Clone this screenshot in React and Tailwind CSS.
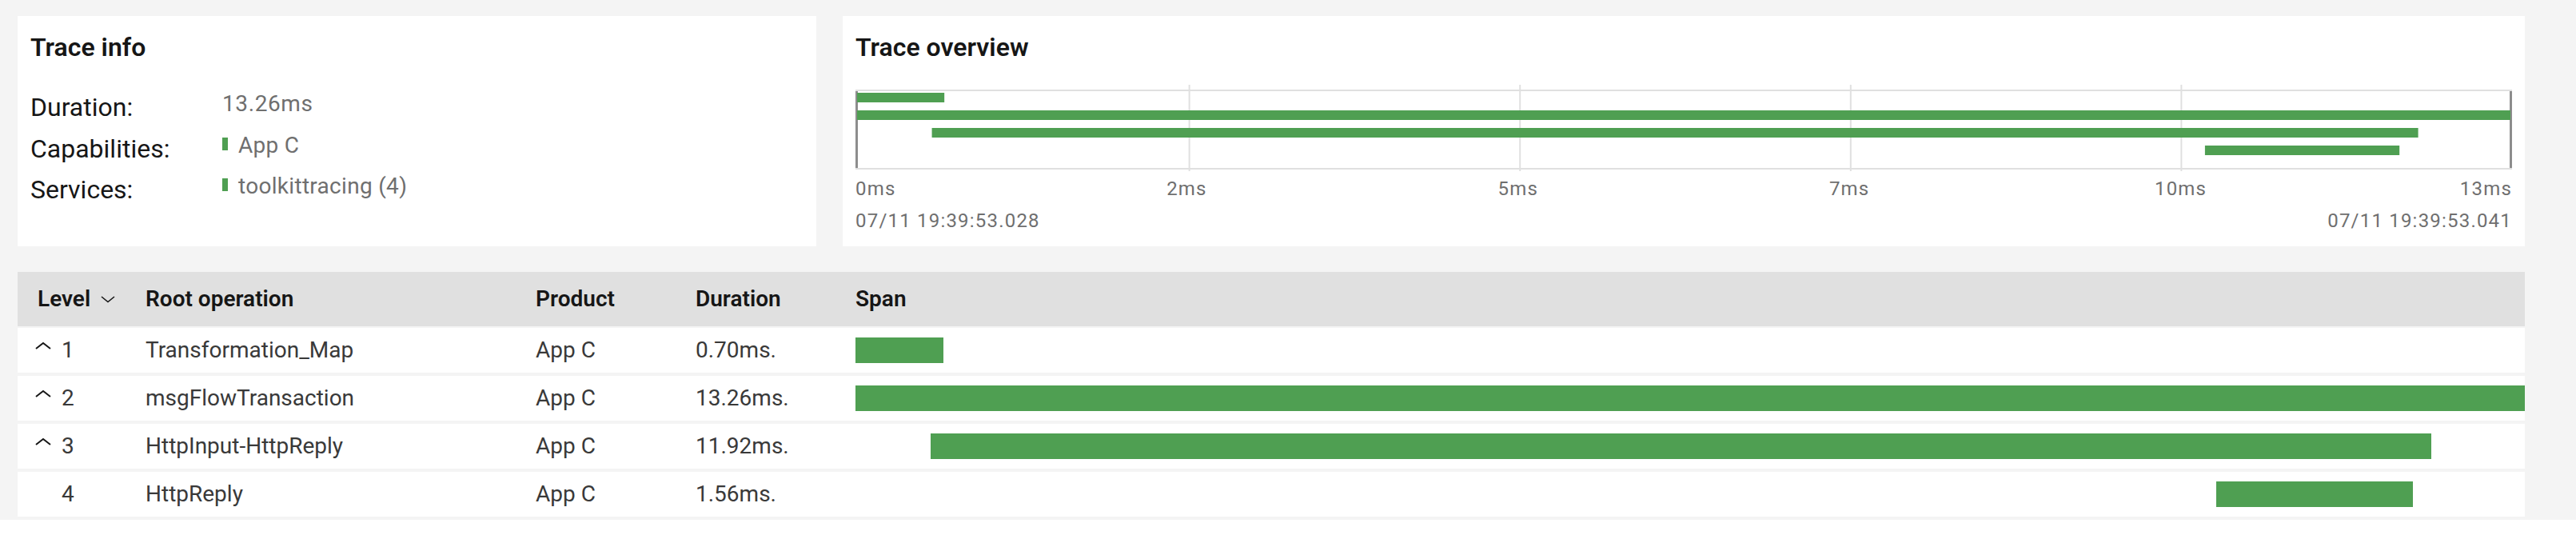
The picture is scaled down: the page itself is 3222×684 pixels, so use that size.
import React from 'react';

const TOTAL = 13.26;

const spans = [
    { level: 1, op: 'Transformation_Map', product: 'App C', duration: 0.7, start: 0, expandable: true },
    { level: 2, op: 'msgFlowTransaction', product: 'App C', duration: 13.26, start: 0, expandable: true },
    { level: 3, op: 'HttpInput-HttpReply', product: 'App C', duration: 11.92, start: 0.6, expandable: true },
    { level: 4, op: 'HttpReply', product: 'App C', duration: 1.56, start: 10.81, expandable: false },
];

const ticks = [
    { label: '0ms', cls: 'left-0' },
    { label: '2ms', cls: 'left-[20%] -translate-x-1/2' },
    { label: '5ms', cls: 'left-[40%] -translate-x-1/2' },
    { label: '7ms', cls: 'left-[60%] -translate-x-1/2' },
    { label: '10ms', cls: 'left-[80%] -translate-x-1/2' },
    { label: '13ms', cls: 'right-0' },
];

const GREEN = '#4f9f52';

const Overview = () => {
    const W = 2072;
    const scale = 2068;
    return (
        <svg viewBox={`0 0 ${W} 108`} preserveAspectRatio="none" className="block w-full h-[108px]">
            <rect x="0" y="6" width={W} height="2" fill="#e0e0e0" />
            <rect x="0" y="104" width={W} height="2" fill="#e0e0e0" />
            {[1, 2, 3, 4].map((k) => (
                <rect key={k} x={3 + (k * scale) / 5} y="0" width="2" height="108" fill="#e0e0e0" />
            ))}
            <rect x="0" y="8" width="3" height="96" fill="#8d8d8d" />
            <rect x="2069" y="8" width="3" height="96" fill="#8d8d8d" />
            {spans.map((s, i) => (
                <rect
                    key={i}
                    x={2 + (s.start / TOTAL) * scale}
                    y={10 + i * 22}
                    width={(s.duration / TOTAL) * scale}
                    height="12"
                    fill={GREEN}
                />
            ))}
        </svg>
    );
};

const App = () => {
    return (
        <div className="min-h-screen bg-[#f4f4f4] font-['Roboto',sans-serif] text-[#161616]">
            <div className="pl-[22px] pr-[64px] pt-[20px] pb-[4px]">
                {/* Top cards */}
                <div className="flex gap-[33px]">
                    <div className="w-[999px] h-[288px] bg-white px-[16px] pt-[19px]">
                        <h2 className="text-[32px] leading-[40px] font-semibold">Trace info</h2>
                        <div className="mt-[30px]">
                            <div className="flex items-start h-[51.5px]">
                                <div className="w-[240px] text-[32px] leading-[51.5px]">Duration:</div>
                                <div className="text-[28px] leading-[42px] tracking-[0.6px] text-[#6f6f6f]">13.26ms</div>
                            </div>
                            <div className="flex items-start h-[51.5px]">
                                <div className="w-[240px] text-[32px] leading-[51.5px]">Capabilities:</div>
                                <div className="flex items-start gap-[13px]">
                                    <span className="mt-[11px] w-[7px] h-[16px] bg-[#4f9f52]"></span>
                                    <span className="text-[28px] leading-[42px] tracking-[0.3px] text-[#6f6f6f]">App C</span>
                                </div>
                            </div>
                            <div className="flex items-start h-[51.5px]">
                                <div className="w-[240px] text-[32px] leading-[51.5px]">Services:</div>
                                <div className="flex items-start gap-[13px]">
                                    <span className="mt-[11px] w-[7px] h-[16px] bg-[#4f9f52]"></span>
                                    <span className="text-[28px] leading-[42px] tracking-[0.3px] text-[#6f6f6f]">toolkittracing (4)</span>
                                </div>
                            </div>
                        </div>
                    </div>

                    <div className="flex-1 h-[288px] bg-white px-[16px] pt-[19px]">
                        <h2 className="text-[32px] leading-[40px] font-semibold">Trace overview</h2>
                        <div className="mt-[27px]">
                            <Overview />
                        </div>
                        <div className="relative h-[40px] mt-[2px] text-[24px] leading-[40px] tracking-[1.2px] text-[#6f6f6f]">
                            {ticks.map((t) => (
                                <span key={t.label} className={`absolute top-0 ${t.cls}`}>{t.label}</span>
                            ))}
                        </div>
                        <div className="flex justify-between text-[24px] leading-[40px] tracking-[1.2px] text-[#6f6f6f]">
                            <span>07/11 19:39:53.028</span>
                            <span>07/11 19:39:53.041</span>
                        </div>
                    </div>
                </div>

                {/* Spans table */}
                <div className="mt-[32px]">
                    <div className="grid grid-cols-[160px_488px_200px_200px_1fr] items-center h-[68px] bg-[#e0e0e0] text-[28px] font-semibold">
                        <div className="flex items-center gap-[13px] pl-[25px]">
                            <span>Level</span>
                            <svg width="18" height="9" viewBox="0 0 18 9" fill="none" stroke="#161616" strokeWidth="1.6">
                                <polyline points="1,1 9,7.5 17,1" />
                            </svg>
                        </div>
                        <div>Root operation</div>
                        <div>Product</div>
                        <div>Duration</div>
                        <div>Span</div>
                    </div>
                    <div className="mt-[2px] flex flex-col gap-[4px]">
                        {spans.map((s) => (
                            <div
                                key={s.level}
                                className="grid grid-cols-[160px_488px_200px_200px_1fr] items-center h-[56px] bg-white text-[28px] text-[#393939]"
                            >
                                <div className="flex items-center gap-[13px] pl-[22px]">
                                    <svg
                                        width="20"
                                        height="9"
                                        viewBox="0 0 20 9"
                                        fill="none"
                                        stroke={s.expandable ? '#161616' : 'transparent'}
                                        strokeWidth="2"
                                        className="-mt-[12px]"
                                    >
                                        <polyline points="1,8 10,1 19,8" />
                                    </svg>
                                    <span>{s.level}</span>
                                </div>
                                <div>{s.op}</div>
                                <div>{s.product}</div>
                                <div>{s.duration.toFixed(2)}ms.</div>
                                <div className="relative h-[32px]">
                                    <div
                                        className="absolute top-0 h-full bg-[#4f9f52]"
                                        style={{
                                            left: `${(s.start / TOTAL) * 100}%`,
                                            width: `${(s.duration / TOTAL) * 100}%`,
                                        }}
                                    ></div>
                                </div>
                            </div>
                        ))}
                    </div>
                </div>
            </div>
            <div className="h-[40px] bg-white"></div>
        </div>
    );
};

export default App;
